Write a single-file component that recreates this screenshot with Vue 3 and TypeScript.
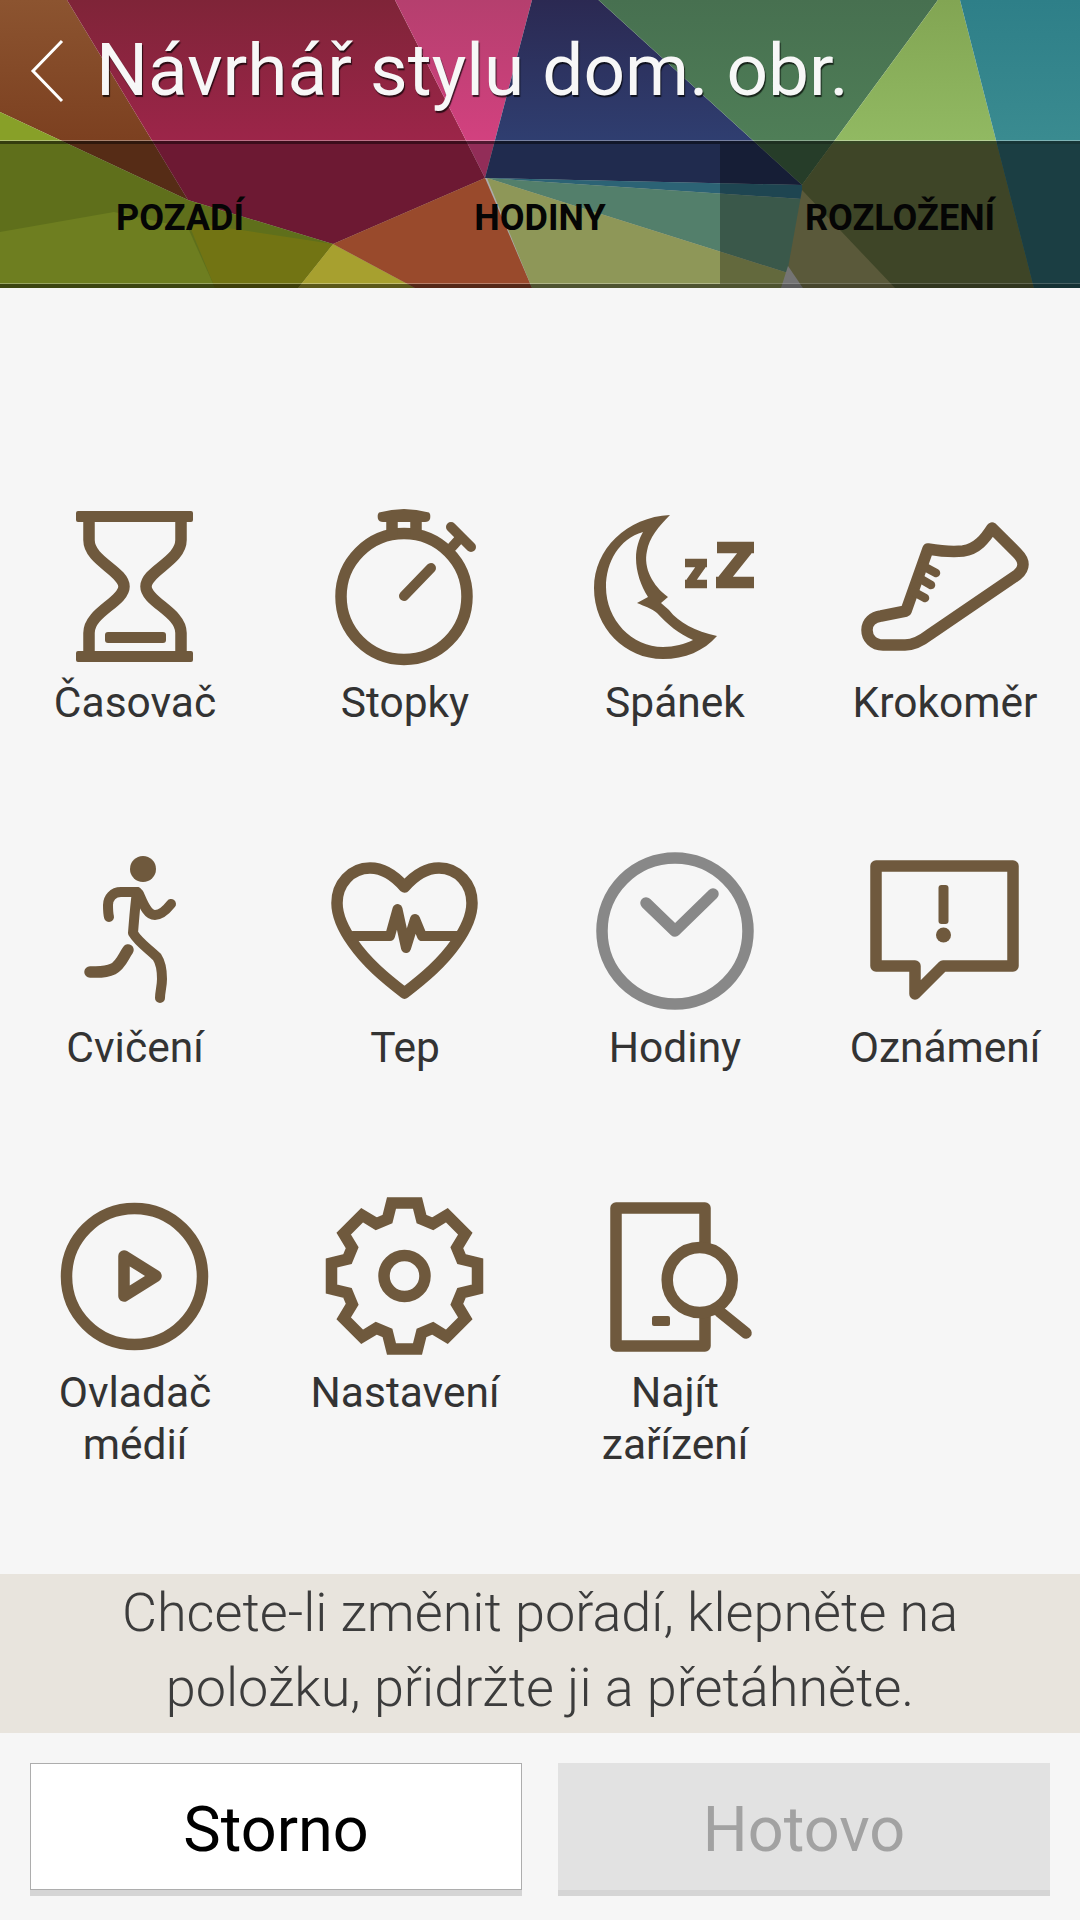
<template>
  <div class="page">
    <!-- Wallpaper header -->
    <header class="header">
      <svg class="wallpaper" viewBox="0 0 1080 288" preserveAspectRatio="none">
        <defs>
          <linearGradient v-for="g in gradients" :id="g.id" :key="g.id" x1="0" y1="0" x2="0" y2="140" gradientUnits="userSpaceOnUse">
            <stop offset="0" :stop-color="g.from" />
            <stop offset="1" :stop-color="g.to" />
          </linearGradient>
        </defs>
        <polygon v-for="(p, i) in facets" :key="i" :points="p.points" :fill="p.fill" />
      </svg>

      <div class="title-bar">
        <svg class="back" width="34" height="64" viewBox="0 0 34 64">
          <path d="M32 2 L3 32 L32 62" fill="none" stroke="#fff" stroke-width="3" />
        </svg>
        <h1 class="title">Návrhář stylu dom. obr.</h1>
      </div>

      <nav class="tabs">
        <div class="tab">POZADÍ</div>
        <div class="tab">HODINY</div>
        <div class="tab active">ROZLOŽENÍ</div>
      </nav>
    </header>

    <!-- Widget grid -->
    <main class="main">
      <div class="grid">
        <div class="cell">
          <svg class="icon" viewBox="0 0 160 160">
            <path class="fill" d="M21 7a2 2 0 0 1 2-2h113a2 2 0 0 1 2 2v7a2 2 0 0 1-2 2H23a2 2 0 0 1-2-2zM21 147a2 2 0 0 1 2-2h113a2 2 0 0 1 2 2v7a2 2 0 0 1-2 2H23a2 2 0 0 1-2-2z" />
            <path class="line" d="M34 16V34C34 55 69 65 69 80.5C69 96 34 106 34 127V146M126 16V34C126 55 91 65 91 80.5C91 96 126 106 126 127V146" />
            <rect class="fill" x="50" y="126" width="61" height="11" rx="3" />
          </svg>
          <span class="label">Časovač</span>
        </div>
        <div class="cell">
          <svg class="icon" viewBox="0 0 160 160">
            <circle class="line" cx="79" cy="90.5" r="63" />
            <path class="line" d="M67 14V30M91 14V30" />
            <path class="fill" d="M54 6.5Q79 -0.5 104 6.5Q106 8 105 13Q104 16 100 16H58Q54 16 53 13Q52 8 54 6.5Z" />
            <path class="line round thin" d="M126 21L146 41M136 31L127 41" />
            <path class="line round thin" d="M106 62L79 90" />
          </svg>
          <span class="label">Stopky</span>
        </div>
        <div class="cell">
          <svg class="icon" viewBox="0 0 160 160">
            <path class="fill" fill-rule="evenodd" d="M75 9C32 11 -1 43 -1 82C-1 122 30 153 68 153C90 153 109 145 122 130C100 125 84 117 74 104L66 97L73 91C58 80 48 62 52 45C54 32 64 20 75 9ZM48 26C24 33 11 56 11 81C11 114 37 141 68 141C79 141 90 138 98 134C84 128 72 118 62 107C56 102 49 100 42 97L53 91C46 80 41 66 41 52C41 42 44 33 48 26Z" />
            <path class="line" d="M122 41.5H159M152 44L128 74M121 76.5H159" />
            <path class="line small" d="M90 57H112M107 59L95 76M90 78H112" />
          </svg>
          <span class="label">Spánek</span>
        </div>
        <div class="cell">
          <svg class="icon" viewBox="0 0 160 160">
            <path class="line round" d="M63 43C75 45 88 46 98 45C112 43 120 33 127 22L152 47C160 55 160 62 152 69L64 129C55 136 48 139 40 139H18C8 139 2 132 2 124C2 116 8 111 16 110L41 105Z" />
            <path class="line round small" d="M58 60L71 67M54 72L66 79M49 86L60 92" />
          </svg>
          <span class="label">Krokoměr</span>
        </div>

        <div class="cell">
          <svg class="icon" viewBox="0 0 160 160">
            <circle class="fill" cx="88" cy="18" r="13" />
            <path class="line round thin" d="M82 41C80 55 79 70 78 82C84 92 94 98 102 106C106 112 107 120 107 128C107 135 105 141 105 147" />
            <path class="line round thin" d="M82 41H66C58 41 53 47 53 54C53 58 53 62 54 66" />
            <path class="line round thin" d="M84 43C88 52 92 64 100 64C106 64 112 58 116 53" />
            <path class="line round" d="M73 99C68 106 66 114 58 118C50 122 42 121 35 121" />
          </svg>
          <span class="label">Cvičení</span>
        </div>
        <div class="cell">
          <svg class="icon" viewBox="0 0 160 160">
            <path class="line round" d="M79.5 36C70 25 58 17 45 17C26 17 12 33 12 52C12 66 18 78 28 92C42 112 60 127 79.5 142C99 127 117 112 131 92C141 78 147 66 147 52C147 33 133 17 114 17C101 17 89 25 79.5 36Z" />
            <path class="line round thin" d="M28 85H65L72.5 58L81 97L90 68L97 85H132" />
          </svg>
          <span class="label">Tep</span>
        </div>
        <div class="cell">
          <svg class="icon grey" viewBox="0 0 160 160">
            <circle class="line" cx="80" cy="80" r="73" />
            <path class="line round" d="M51 52L80 80L118 43" />
          </svg>
          <span class="label">Hodiny</span>
        </div>
        <div class="cell">
          <svg class="icon" viewBox="0 0 160 160">
            <path class="line join" d="M11 15H148V115H78L50 143V115H11Z" />
            <rect class="fill" x="73.5" y="34" width="10" height="39" rx="3" />
            <circle class="fill" cx="78.5" cy="84" r="7.5" />
          </svg>
          <span class="label">Oznámení</span>
        </div>

        <div class="cell">
          <svg class="icon" viewBox="0 0 160 160">
            <circle class="line" cx="79.5" cy="80.5" r="68" />
            <path class="line join" d="M69 60L101 80L69 100Z" />
          </svg>
          <span class="label">Ovladač médií</span>
        </div>
        <div class="cell">
          <svg class="icon" viewBox="0 0 160 160">
            <path class="line" :d="gearPath" />
            <circle class="line" cx="79.5" cy="80" r="20.5" />
          </svg>
          <span class="label">Nastavení</span>
        </div>
        <div class="cell">
          <svg class="icon" viewBox="0 0 160 160">
            <path class="line join" d="M110 48V12H21V150H110V120" />
            <circle class="line" cx="104.7" cy="84" r="32.5" />
            <path class="line round" d="M125 116L151 137" />
            <rect class="fill" x="57" y="120" width="18" height="10" rx="2" />
          </svg>
          <span class="label">Najít zařízení</span>
        </div>
      </div>
    </main>

    <p class="hint">Chcete-li změnit pořadí, klepněte na<br />položku, přidržte ji a přetáhněte.</p>

    <footer class="footer">
      <button class="btn cancel">Storno</button>
      <button class="btn done" disabled>Hotovo</button>
    </footer>
  </div>
</template>

<script setup lang="ts">
const gradients = [
  { id: 'brown', from: '#8c5430', to: '#7c4020' },
  { id: 'crimson', from: '#7f2438', to: '#9c2549' },
  { id: 'pink', from: '#b53f6e', to: '#d2417f' },
  { id: 'navy', from: '#2b2952', to: '#2f3e70' },
  { id: 'green', from: '#477050', to: '#4f7e57' },
  { id: 'lime', from: '#82a553', to: '#91b962' },
  { id: 'teal', from: '#2e7f88', to: '#3a8b90' },
]

// wallpaper facets, back to front
const facets = [
  { points: '0,0 67,0 188,200 0,112', fill: 'url(#brown)' },
  { points: '67,0 395,0 485,178 333,244 188,200', fill: 'url(#crimson)' },
  { points: '395,0 532,0 485,178', fill: 'url(#pink)' },
  { points: '532,0 598.5,0 802,185 485,178', fill: 'url(#navy)' },
  { points: '598.5,0 938,0 802,185', fill: 'url(#green)' },
  { points: '938,0 960,0 1034,288 786,288 802,185', fill: 'url(#lime)' },
  { points: '832,144 997,144 1034,288 786,288 802,185', fill: '#818f52' },
  { points: '960,0 1080,0 1080,288 1034,288', fill: 'url(#teal)' },
  { points: '997,144 1080,144 1080,288 1034,288', fill: '#39808a' },
  { points: '0,112 188,200 333,244 298,288 0,288', fill: '#88a028' },
  { points: '0,232 114,212 188,228 215,288 0,288', fill: '#9eb52e' },
  { points: '188,222 333,244 298,288 215,288', fill: '#a4a71c' },
  { points: '333,244 415,288 298,288', fill: '#f0e544' },
  { points: '485,178 532,288 415,288 333,244', fill: '#dc6a3f' },
  { points: '485,178 802,185 802,199', fill: '#408ea8' },
  { points: '487,178 802,199 788,273', fill: '#78b79a' },
  { points: '487,178 788,273 786,288 532,288', fill: '#ccd97e' },
  { points: '802,190 895,288 803,288 788,268', fill: '#b9b877' },
  { points: '781,288 788,266 803,288', fill: '#f0f0ee' },
]

// eight-toothed cog outline around the centre of the icon box
function buildGear(cx: number, cy: number): string {
  const tooth = [[-13, -73], [13, -73], [17, -57]]
  const pts: string[] = []
  for (let i = 0; i < 8; i++) {
    const a = (i * Math.PI) / 4
    for (const [x, y] of [[-17, -57], ...tooth]) {
      const px = cx + x * Math.cos(a) - y * Math.sin(a)
      const py = cy + x * Math.sin(a) + y * Math.cos(a)
      pts.push(`${px.toFixed(1)} ${py.toFixed(1)}`)
    }
  }
  return `M${pts.join('L')}Z`
}

const gearPath = buildGear(79.5, 80)
</script>

<style>
html,
body {
  margin: 0;
  background: #f6f6f6;
}
</style>

<style scoped>
.page {
  width: 1080px;
  height: 1920px;
  display: flex;
  flex-direction: column;
  background: #f6f6f6;
  font-family: Roboto, "Liberation Sans", sans-serif;
  overflow: hidden;
}

/* Header */
.header {
  position: relative;
  height: 288px;
  flex: none;
  display: flex;
  flex-direction: column;
}

.wallpaper {
  position: absolute;
  inset: 0;
  width: 100%;
  height: 100%;
}

.title-bar {
  position: relative;
  height: 141px;
  flex: none;
  display: flex;
  align-items: center;
  padding-left: 30px;
  box-sizing: border-box;
  border-bottom: 1px solid rgba(255, 255, 255, 0.35);
}

.back {
  flex: none;
  margin-top: 2px;
}

.title {
  margin: 0 0 0 32px;
  font-size: 73px;
  font-weight: 400;
  color: #f7f7f7;
  white-space: nowrap;
  text-shadow: 1px 2px 1px rgba(0, 0, 0, 0.7);
}

.tabs {
  position: relative;
  flex: 1;
  display: flex;
  background: rgba(0, 0, 0, 0.3);
  border-top: 3px solid rgba(0, 0, 0, 0.45);
  border-bottom: 4px solid rgba(0, 0, 0, 0.45);
  box-shadow: inset 0 -1px 0 rgba(255, 255, 255, 0.3);
}

.tab {
  flex: 1;
  display: flex;
  align-items: center;
  justify-content: center;
  padding-top: 8px;
  font-size: 36px;
  font-weight: 700;
  color: #050505;
}

.tab.active {
  background: rgba(0, 0, 0, 0.3);
}

/* Grid */
.main {
  flex: 1;
  padding-top: 218px;
}

.grid {
  display: grid;
  grid-template-columns: repeat(4, 270px);
  grid-auto-rows: 345px;
}

.cell {
  display: flex;
  flex-direction: column;
  align-items: center;
}

.icon {
  width: 160px;
  height: 160px;
  flex: none;
  overflow: visible;
  color: #6f593d;
}

.icon.grey {
  color: #888888;
}

.fill {
  fill: currentColor;
}

.line {
  fill: none;
  stroke: currentColor;
  stroke-width: 11.5;
}

.line.round {
  stroke-linecap: round;
  stroke-linejoin: round;
}

.line.join {
  stroke-linejoin: round;
}

.line.thin {
  stroke-width: 10;
}

.line.small {
  stroke-width: 8.5;
}

.label {
  margin-top: 11px;
  padding: 0 20px;
  font-size: 42.5px;
  line-height: 52px;
  color: #333;
  text-align: center;
}

/* Hint */
.hint {
  flex: none;
  height: 159px;
  margin: 0;
  padding-top: 1px;
  box-sizing: border-box;
  background: #e8e4dd;
  color: #3c3c3c;
  font-size: 54px;
  font-weight: 300;
  line-height: 75px;
  text-align: center;
}

/* Footer */
.footer {
  flex: none;
  height: 187px;
  box-sizing: border-box;
  padding: 30px 30px 0;
  display: flex;
  gap: 36px;
}

.btn {
  flex: 1;
  height: 127px;
  padding: 5px 0 0;
  border: 1px solid transparent;
  border-radius: 0;
  font-family: inherit;
  font-size: 63px;
  box-shadow: 0 6px 0 #d5d5d5;
}

.btn.cancel {
  background: #fff;
  border-color: #adadad;
  color: #000;
}

.btn.done {
  background: #e2e2e2;
  color: #a2a2a2;
}
</style>
